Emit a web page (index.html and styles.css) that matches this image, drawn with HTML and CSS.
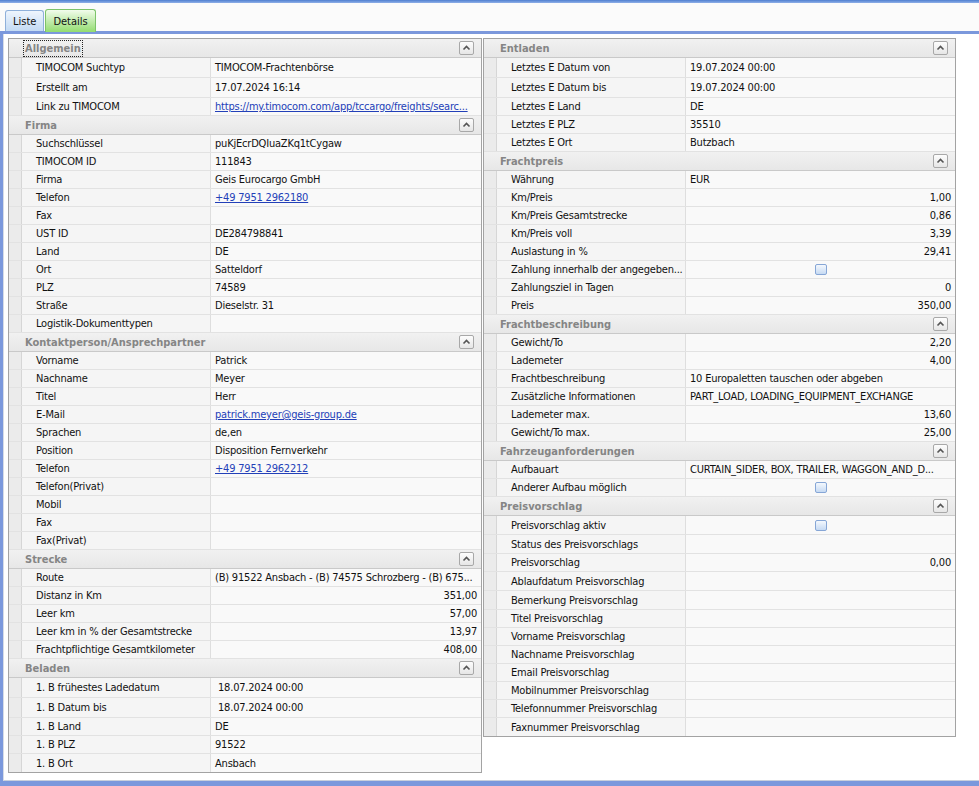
FILE: index.html
```html
<!DOCTYPE html>
<html lang="de">
<head>
<meta charset="utf-8">
<title>Details</title>
<link rel="stylesheet" href="styles.css">
</head>
<body>
<div class="topbar"></div>
<div class="tabstrip">
  <div class="tab">Liste</div>
  <div class="tab active">Details</div>
</div>
<div class="frame">
  <div class="inner">
    <div class="panel left">
      <div class="group"><span class="focus">Allgemein</span><span class="btn"><svg width="9" height="8" viewBox="0 0 9 8"><path d="M1.5 5.5 L4.5 2.5 L7.5 5.5" fill="none" stroke="#555" stroke-width="1.6"/></svg></span></div>
      <div class="row h20"><span class="ind"></span><span class="lbl">TIMOCOM Suchtyp</span><span class="val">TIMOCOM-Frachtenbörse</span></div>
      <div class="row h20"><span class="ind"></span><span class="lbl">Erstellt am</span><span class="val">17.07.2024 16:14</span></div>
      <div class="row"><span class="ind"></span><span class="lbl">Link zu TIMOCOM</span><span class="val link">https://my.timocom.com/app/tccargo/freights/searc...</span></div>

      <div class="group"><span>Firma</span><span class="btn"><svg width="9" height="8" viewBox="0 0 9 8"><path d="M1.5 5.5 L4.5 2.5 L7.5 5.5" fill="none" stroke="#555" stroke-width="1.6"/></svg></span></div>
      <div class="row"><span class="ind"></span><span class="lbl">Suchschlüssel</span><span class="val">puKjEcrDQIuaZKq1tCygaw</span></div>
      <div class="row"><span class="ind"></span><span class="lbl">TIMOCOM ID</span><span class="val">111843</span></div>
      <div class="row"><span class="ind"></span><span class="lbl">Firma</span><span class="val">Geis Eurocargo GmbH</span></div>
      <div class="row"><span class="ind"></span><span class="lbl">Telefon</span><span class="val link">+49 7951 2962180</span></div>
      <div class="row"><span class="ind"></span><span class="lbl">Fax</span><span class="val"></span></div>
      <div class="row"><span class="ind"></span><span class="lbl">UST ID</span><span class="val">DE284798841</span></div>
      <div class="row"><span class="ind"></span><span class="lbl">Land</span><span class="val">DE</span></div>
      <div class="row"><span class="ind"></span><span class="lbl">Ort</span><span class="val">Satteldorf</span></div>
      <div class="row"><span class="ind"></span><span class="lbl">PLZ</span><span class="val">74589</span></div>
      <div class="row"><span class="ind"></span><span class="lbl">Straße</span><span class="val">Dieselstr. 31</span></div>
      <div class="row"><span class="ind"></span><span class="lbl">Logistik-Dokumenttypen</span><span class="val"></span></div>

      <div class="group"><span>Kontaktperson/Ansprechpartner</span><span class="btn"><svg width="9" height="8" viewBox="0 0 9 8"><path d="M1.5 5.5 L4.5 2.5 L7.5 5.5" fill="none" stroke="#555" stroke-width="1.6"/></svg></span></div>
      <div class="row"><span class="ind"></span><span class="lbl">Vorname</span><span class="val">Patrick</span></div>
      <div class="row"><span class="ind"></span><span class="lbl">Nachname</span><span class="val">Meyer</span></div>
      <div class="row"><span class="ind"></span><span class="lbl">Titel</span><span class="val">Herr</span></div>
      <div class="row"><span class="ind"></span><span class="lbl">E-Mail</span><span class="val link">patrick.meyer@geis-group.de</span></div>
      <div class="row"><span class="ind"></span><span class="lbl">Sprachen</span><span class="val">de,en</span></div>
      <div class="row"><span class="ind"></span><span class="lbl">Position</span><span class="val">Disposition Fernverkehr</span></div>
      <div class="row"><span class="ind"></span><span class="lbl">Telefon</span><span class="val link">+49 7951 2962212</span></div>
      <div class="row"><span class="ind"></span><span class="lbl">Telefon(Privat)</span><span class="val"></span></div>
      <div class="row"><span class="ind"></span><span class="lbl">Mobil</span><span class="val"></span></div>
      <div class="row"><span class="ind"></span><span class="lbl">Fax</span><span class="val"></span></div>
      <div class="row"><span class="ind"></span><span class="lbl">Fax(Privat)</span><span class="val"></span></div>

      <div class="group"><span>Strecke</span><span class="btn"><svg width="9" height="8" viewBox="0 0 9 8"><path d="M1.5 5.5 L4.5 2.5 L7.5 5.5" fill="none" stroke="#555" stroke-width="1.6"/></svg></span></div>
      <div class="row"><span class="ind"></span><span class="lbl">Route</span><span class="val">(B) 91522 Ansbach - (B) 74575 Schrozberg - (B) 675...</span></div>
      <div class="row"><span class="ind"></span><span class="lbl">Distanz in Km</span><span class="val num">351,00</span></div>
      <div class="row"><span class="ind"></span><span class="lbl">Leer km</span><span class="val num">57,00</span></div>
      <div class="row"><span class="ind"></span><span class="lbl">Leer km in % der Gesamtstrecke</span><span class="val num">13,97</span></div>
      <div class="row"><span class="ind"></span><span class="lbl">Frachtpflichtige Gesamtkilometer</span><span class="val num">408,00</span></div>

      <div class="group"><span>Beladen</span><span class="btn"><svg width="9" height="8" viewBox="0 0 9 8"><path d="M1.5 5.5 L4.5 2.5 L7.5 5.5" fill="none" stroke="#555" stroke-width="1.6"/></svg></span></div>
      <div class="row h20"><span class="ind"></span><span class="lbl">1. B frühestes Ladedatum</span><span class="val date">18.07.2024 00:00</span></div>
      <div class="row h20"><span class="ind"></span><span class="lbl">1. B Datum bis</span><span class="val date">18.07.2024 00:00</span></div>
      <div class="row"><span class="ind"></span><span class="lbl">1. B Land</span><span class="val">DE</span></div>
      <div class="row"><span class="ind"></span><span class="lbl">1. B PLZ</span><span class="val">91522</span></div>
      <div class="row"><span class="ind"></span><span class="lbl">1. B Ort</span><span class="val">Ansbach</span></div>
    </div>

    <div class="panel right">
      <div class="group"><span>Entladen</span><span class="btn"><svg width="9" height="8" viewBox="0 0 9 8"><path d="M1.5 5.5 L4.5 2.5 L7.5 5.5" fill="none" stroke="#555" stroke-width="1.6"/></svg></span></div>
      <div class="row h20"><span class="ind"></span><span class="lbl">Letztes E Datum von</span><span class="val">19.07.2024 00:00</span></div>
      <div class="row h20"><span class="ind"></span><span class="lbl">Letztes E Datum bis</span><span class="val">19.07.2024 00:00</span></div>
      <div class="row"><span class="ind"></span><span class="lbl">Letztes E Land</span><span class="val">DE</span></div>
      <div class="row"><span class="ind"></span><span class="lbl">Letztes E PLZ</span><span class="val">35510</span></div>
      <div class="row"><span class="ind"></span><span class="lbl">Letztes E Ort</span><span class="val">Butzbach</span></div>

      <div class="group"><span>Frachtpreis</span><span class="btn"><svg width="9" height="8" viewBox="0 0 9 8"><path d="M1.5 5.5 L4.5 2.5 L7.5 5.5" fill="none" stroke="#555" stroke-width="1.6"/></svg></span></div>
      <div class="row"><span class="ind"></span><span class="lbl">Währung</span><span class="val">EUR</span></div>
      <div class="row"><span class="ind"></span><span class="lbl">Km/Preis</span><span class="val num">1,00</span></div>
      <div class="row"><span class="ind"></span><span class="lbl">Km/Preis Gesamtstrecke</span><span class="val num">0,86</span></div>
      <div class="row"><span class="ind"></span><span class="lbl">Km/Preis voll</span><span class="val num">3,39</span></div>
      <div class="row"><span class="ind"></span><span class="lbl">Auslastung in %</span><span class="val num">29,41</span></div>
      <div class="row"><span class="ind"></span><span class="lbl">Zahlung innerhalb der angegeben...</span><span class="val chk"><span class="box"></span></span></div>
      <div class="row"><span class="ind"></span><span class="lbl">Zahlungsziel in Tagen</span><span class="val num">0</span></div>
      <div class="row"><span class="ind"></span><span class="lbl">Preis</span><span class="val num">350,00</span></div>

      <div class="group"><span>Frachtbeschreibung</span><span class="btn"><svg width="9" height="8" viewBox="0 0 9 8"><path d="M1.5 5.5 L4.5 2.5 L7.5 5.5" fill="none" stroke="#555" stroke-width="1.6"/></svg></span></div>
      <div class="row"><span class="ind"></span><span class="lbl">Gewicht/To</span><span class="val num">2,20</span></div>
      <div class="row"><span class="ind"></span><span class="lbl">Lademeter</span><span class="val num">4,00</span></div>
      <div class="row"><span class="ind"></span><span class="lbl">Frachtbeschreibung</span><span class="val">10 Europaletten tauschen oder abgeben</span></div>
      <div class="row"><span class="ind"></span><span class="lbl">Zusätzliche Informationen</span><span class="val">PART_LOAD, LOADING_EQUIPMENT_EXCHANGE</span></div>
      <div class="row"><span class="ind"></span><span class="lbl">Lademeter max.</span><span class="val num">13,60</span></div>
      <div class="row"><span class="ind"></span><span class="lbl">Gewicht/To max.</span><span class="val num">25,00</span></div>

      <div class="group"><span>Fahrzeuganforderungen</span><span class="btn"><svg width="9" height="8" viewBox="0 0 9 8"><path d="M1.5 5.5 L4.5 2.5 L7.5 5.5" fill="none" stroke="#555" stroke-width="1.6"/></svg></span></div>
      <div class="row"><span class="ind"></span><span class="lbl">Aufbauart</span><span class="val">CURTAIN_SIDER, BOX, TRAILER, WAGGON_AND_D...</span></div>
      <div class="row"><span class="ind"></span><span class="lbl">Anderer Aufbau möglich</span><span class="val chk"><span class="box"></span></span></div>

      <div class="group"><span>Preisvorschlag</span><span class="btn"><svg width="9" height="8" viewBox="0 0 9 8"><path d="M1.5 5.5 L4.5 2.5 L7.5 5.5" fill="none" stroke="#555" stroke-width="1.6"/></svg></span></div>
      <div class="row h19"><span class="ind"></span><span class="lbl">Preisvorschlag aktiv</span><span class="val chk"><span class="box"></span></span></div>
      <div class="row h19"><span class="ind"></span><span class="lbl">Status des Preisvorschlags</span><span class="val"></span></div>
      <div class="row"><span class="ind"></span><span class="lbl">Preisvorschlag</span><span class="val num">0,00</span></div>
      <div class="row h19"><span class="ind"></span><span class="lbl">Ablaufdatum Preisvorschlag</span><span class="val"></span></div>
      <div class="row h19"><span class="ind"></span><span class="lbl">Bemerkung Preisvorschlag</span><span class="val"></span></div>
      <div class="row"><span class="ind"></span><span class="lbl">Titel Preisvorschlag</span><span class="val"></span></div>
      <div class="row"><span class="ind"></span><span class="lbl">Vorname Preisvorschlag</span><span class="val"></span></div>
      <div class="row"><span class="ind"></span><span class="lbl">Nachname Preisvorschlag</span><span class="val"></span></div>
      <div class="row"><span class="ind"></span><span class="lbl">Email Preisvorschlag</span><span class="val"></span></div>
      <div class="row"><span class="ind"></span><span class="lbl">Mobilnummer Preisvorschlag</span><span class="val"></span></div>
      <div class="row"><span class="ind"></span><span class="lbl">Telefonnummer Preisvorschlag</span><span class="val"></span></div>
      <div class="row"><span class="ind"></span><span class="lbl">Faxnummer Preisvorschlag</span><span class="val"></span></div>
    </div>
  </div>
</div>
</body>
</html>
```
FILE: styles.css
```css
* { box-sizing: border-box; }
html, body { margin: 0; padding: 0; }
body {
  width: 979px;
  height: 786px;
  overflow: hidden;
  background: #fff;
  font-family: "DejaVu Sans Condensed", "DejaVu Sans", sans-serif;
  font-size: 11px;
  color: #111;
}
.topbar {
  height: 3px;
  background: linear-gradient(#4f7fd0, #8fb0e8);
}
.tabstrip {
  height: 28px;
  background: #fbfbfb;
  display: flex;
  align-items: flex-end;
  padding-left: 5px;
  gap: 1px;
}
.tab {
  height: 21px;
  padding: 3px 7px 0 7px;
  border: 1px solid #8fb0da;
  border-bottom: none;
  border-radius: 3px 3px 0 0;
  background: linear-gradient(#eef5fd, #c3daf4);
  color: #111;
  line-height: 15px;
}
.tab.active {
  height: 23px;
  margin-bottom: -1px;
  position: relative;
  z-index: 1;
  padding-top: 4px;
  border-color: #7cc36a;
  background: linear-gradient(#f2fcec, #93dc70);
}
.frame {
  height: 755px;
  border-top: 3px solid #7b98dc;
  border-left: 3px solid #7b98dc;
  border-bottom: 5px solid #7b98dc;
  background: #fff;
}
.inner {
  height: 100%;
  border-bottom: 1px solid #c8cfdc;
  border-left: 1px solid #d7dce6;
  padding: 4px 0 0 4px;
  display: flex;
  align-items: flex-start;
  gap: 1px;
}
.panel {
  border: 1px solid #a3a3a3;
  background: #f8f8f8;
}
.panel.left { width: 474px; }
.panel.right { width: 473px; }
.group {
  height: 19px;
  display: flex;
  align-items: center;
  justify-content: space-between;
  padding: 0 7px 0 16px;
  background: linear-gradient(#f1f1f1, #e7e7e7);
  border-bottom: 1px solid #c9c9c9;
  color: #858585;
  font-weight: bold;
}
.group .focus {
  outline: 1px dotted #222;
  outline-offset: 1px;
}
.btn {
  width: 15px;
  height: 14px;
  border: 1px solid #a8a8a8;
  border-radius: 2px;
  background: linear-gradient(#fdfdfd, #e6e6e6);
  display: flex;
  align-items: center;
  justify-content: center;
}
.btn svg { display: block; }
.row {
  height: 18px;
  display: flex;
  border-bottom: 1px solid #e2e2e2;
  letter-spacing: -0.2px;
}
.row.h19 { height: 19px; }
.row.h20 { height: 20px; }
.panel > .row:last-child { border-bottom: none; }
.ind {
  width: 13px;
  flex: none;
  background: #ebebeb;
  border-right: 1px solid #d6d6d6;
}
.lbl {
  width: 189px;
  flex: none;
  padding-left: 14px;
  background: #f5f5f5;
  border-right: 1px solid #dedede;
  display: flex;
  align-items: center;
  white-space: nowrap;
  overflow: hidden;
}
.val {
  flex: 1;
  padding: 0 4px;
  background: #f9f9f9;
  display: flex;
  align-items: center;
  white-space: nowrap;
  overflow: hidden;
}
.val.date { padding-left: 7px; }
.val.num { justify-content: flex-end; }
.val.link {
  color: #2340b8;
  text-decoration: underline;
}
.val.chk { justify-content: center; }
.box {
  width: 12px;
  height: 11px;
  border: 1px solid #86a6d6;
  border-radius: 2px;
  background: linear-gradient(#f4f8fd, #c6daf3);
}
```
